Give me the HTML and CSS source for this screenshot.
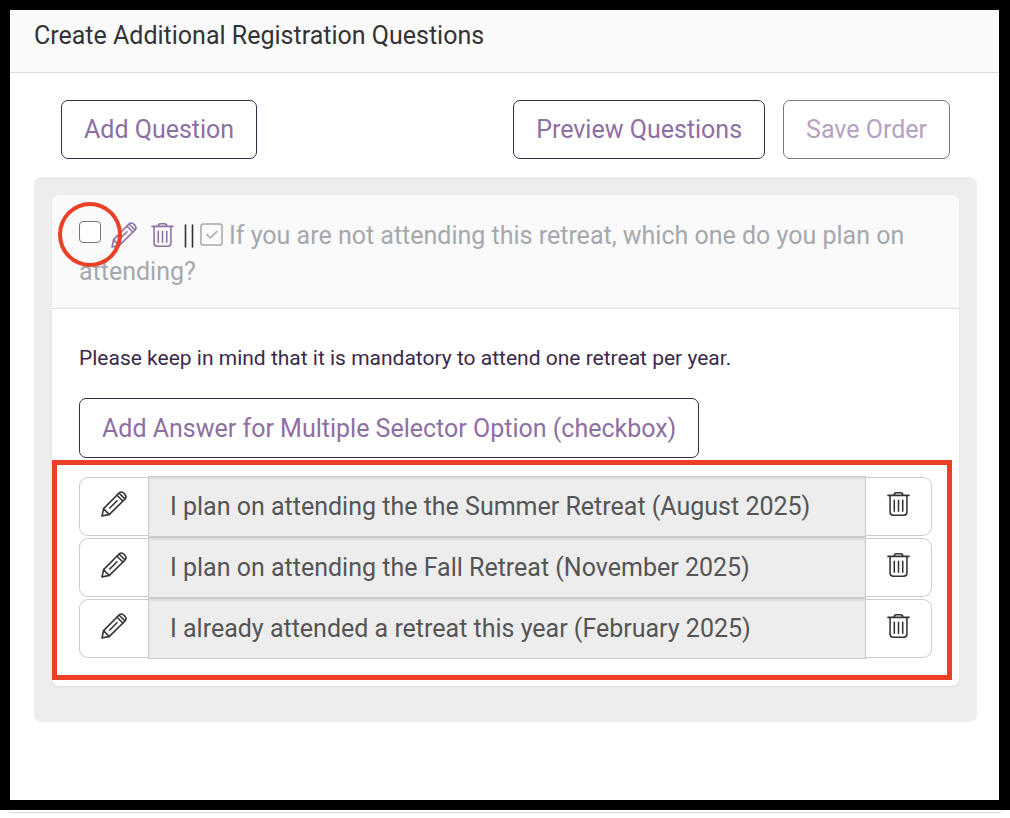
FILE: index.html
```html
<!DOCTYPE html>
<html lang="en">
<head>
    <meta charset="UTF-8">
    <title>Create Additional Registration Questions</title>
    <link rel="stylesheet" href="styles.css">
</head>
<body>
    <!-- icons used on this page -->
    <svg class="sprite" aria-hidden="true">
        <symbol id="pencil" viewBox="0 0 26 26">
            <path d="M1 25 L2.6 17.6 L17.8 2.2 C19.2 .8 21.2 .8 22.6 2 L24 3.4 C25.2 4.8 25.2 6.8 23.8 8.2 L8.4 23.4 Z"/>
            <path d="M2.6 17.6 C3.2 19.4 5 19.2 5.2 20.8 C7 21 6.6 22.8 8.4 23.4 M16 4.2 L21.8 10 M18.2 2.2 L23.8 7.8 M16 9.8 L8.8 17"/>
        </symbol>
        <symbol id="trash" viewBox="0 0 24 26">
            <path d="M1 4 H23 M3.2 4 V21.4 C3.2 23.6 4.4 24.8 6.6 24.8 H17.4 C19.6 24.8 20.8 23.6 20.8 21.4 V4 M7.4 4 C7.4 2 8.4 1.2 10 1.2 H14 C15.6 1.2 16.6 2 16.6 4 M7.6 9 V20.6 M12 9 V20.6 M16.4 9 V20.6"/>
        </symbol>
        <symbol id="handle" viewBox="0 0 10 24">
            <path d="M1.5 1 V23 M8.5 1 V23"/>
        </symbol>
        <symbol id="check" viewBox="0 0 24 24">
            <rect x="1" y="1" width="22" height="22" rx="2.5"/>
            <path d="M7 12.2 L10.8 15.6 L17.6 8.8"/>
        </symbol>
    </svg>

    <main class="page">
        <header class="page-header">
            <h1>Create Additional Registration Questions</h1>
        </header>

        <div class="content">
            <div class="toolbar">
                <button type="button" class="btn">Add Question</button>
                <div class="toolbar-right">
                    <button type="button" class="btn">Preview Questions</button>
                    <button type="button" class="btn" disabled>Save Order</button>
                </div>
            </div>

            <div class="panel">
                <section class="card">
                    <div class="card-header">
                        <span class="select-box">
                            <input type="checkbox" id="question1" aria-label="Select question">
                        </span>
                        <button type="button" class="icon-btn edit" aria-label="Edit question"><svg class="icon pencil"><use href="#pencil"/></svg></button>
                        <button type="button" class="icon-btn delete" aria-label="Delete question"><svg class="icon trash"><use href="#trash"/></svg></button>
                        <svg class="icon handle"><use href="#handle"/></svg>
                        <svg class="icon check"><use href="#check"/></svg>
                        <label for="question1">If you are not attending this retreat, which one do you plan on attending?</label>
                    </div>

                    <div class="card-body">
                        <p>Please keep in mind that it is mandatory to attend one retreat per year.</p>
                        <button type="button" class="btn">Add Answer for Multiple Selector Option (checkbox)</button>

                        <div class="answers">
                            <div class="answer">
                                <button type="button" class="edit" aria-label="Edit answer"><svg class="icon pencil"><use href="#pencil"/></svg></button>
                                <input type="text" aria-label="Answer 1" value="I plan on attending the the Summer Retreat (August 2025)" readonly>
                                <button type="button" class="delete" aria-label="Delete answer"><svg class="icon trash"><use href="#trash"/></svg></button>
                            </div>
                            <div class="answer">
                                <button type="button" class="edit" aria-label="Edit answer"><svg class="icon pencil"><use href="#pencil"/></svg></button>
                                <input type="text" aria-label="Answer 2" value="I plan on attending the Fall Retreat (November 2025)" readonly>
                                <button type="button" class="delete" aria-label="Delete answer"><svg class="icon trash"><use href="#trash"/></svg></button>
                            </div>
                            <div class="answer">
                                <button type="button" class="edit" aria-label="Edit answer"><svg class="icon pencil"><use href="#pencil"/></svg></button>
                                <input type="text" aria-label="Answer 3" value="I already attended a retreat this year (February 2025)" readonly>
                                <button type="button" class="delete" aria-label="Delete answer"><svg class="icon trash"><use href="#trash"/></svg></button>
                            </div>
                        </div>
                    </div>
                </section>
            </div>
        </div>
    </main>
    <div class="page-edge"></div>
</body>
</html>
```

FILE: styles.css
```css
* {
    box-sizing: border-box;
}

body {
    margin: 0;
    background-color: #ffffff;
    color: #333333;
    font-family: Roboto, "Liberation Sans", sans-serif;
    font-size: 25px;
}

button, input {
    font: inherit;
}

.sprite {
    position: absolute;
    width: 0;
    height: 0;
}

.page {
    border: 10px solid #000000;
    border-right-width: 11px;
}

.page-header {
    padding: 8px 24px 18px;
    background-color: #fafafa;
    border-bottom: 1px solid #dddddd;
}

.page-header h1 {
    margin: 0;
    font-size: 25px;
    font-weight: 400;
    line-height: 36px;
}

.content {
    padding: 27px 22px 78px 24px;
}

/* Buttons */
.btn {
    height: 59px;
    padding: 0 22px;
    border: 1px solid #3b2a4a;
    border-radius: 7px;
    background-color: #ffffff;
    color: #8e6fa3;
    cursor: pointer;
}

.btn:disabled {
    opacity: 0.65;
    cursor: default;
}

.toolbar {
    display: flex;
    justify-content: space-between;
    padding: 0 27px;
    margin-bottom: 18px;
}

.toolbar-right {
    display: flex;
    gap: 18px;
}

.panel {
    padding: 18px 18px 36px;
    border-radius: 7px;
    background-color: #ededed;
}

.card {
    border-radius: 7px;
    background-color: #ffffff;
    box-shadow: 0 1px 2px rgba(0, 0, 0, 0.08);
}

.card-header {
    padding: 23px 27px 18px;
    border-bottom: 1px solid #dddddd;
    border-radius: 7px 7px 0 0;
    background-color: #fafafa;
    color: #a5a8ad;
    line-height: 36px;
}

/* Icons */
.icon {
    fill: none;
    stroke: currentColor;
    stroke-width: 1.6;
    stroke-linecap: round;
    stroke-linejoin: round;
    vertical-align: -4px;
}

.pencil {
    width: 26px;
    height: 26px;
}

.trash {
    width: 23px;
    height: 26px;
}

.handle {
    width: 10px;
    height: 24px;
    color: #333333;
}

.check {
    width: 23px;
    height: 23px;
    vertical-align: -2px;
}

.icon-btn {
    padding: 0;
    border: 0;
    background: none;
    color: #8e6fa3;
    line-height: 26px;
}

.icon-btn.edit {
    margin-right: 8px;
}

.icon-btn.delete {
    margin-right: 3px;
}

/* Question selector with the red ring round it */
.select-box {
    display: inline-block;
    position: relative;
    width: 22px;
    height: 22px;
    margin-right: 4px;
    vertical-align: 1px;
}

.select-box input {
    display: block;
    appearance: none;
    width: 22px;
    height: 22px;
    margin: 0;
    border: 1px solid #767676;
    border-radius: 4px;
    background-color: #ffffff;
}

.select-box::after {
    content: "";
    position: absolute;
    inset: -19px -21px -24px;
    border: 4px solid #eb4026;
    border-radius: 50%;
    pointer-events: none;
}

.card-body {
    padding: 34px 27px 27px;
}

.card-body p {
    margin: 0 0 25px;
    color: #3b2a4a;
    font-size: 21px;
    line-height: 30px;
}

.card-body .btn {
    display: block;
    height: 60px;
}

/* Answer rows */
.answers {
    position: relative;
    margin-top: 18px;
}

.answers::after {
    content: "";
    position: absolute;
    inset: -16px -20px -21px -27px;
    border: 5px solid #eb4026;
    pointer-events: none;
}

.answer {
    display: flex;
}

.answer button {
    margin: 1px 0;
    padding: 0 0 5px;
    border: 1px solid #cccccc;
    background-color: #ffffff;
    color: #333333;
}

.answer .edit {
    width: 69px;
    border-right: 0;
    border-radius: 9px 0 0 9px;
}

.answer .delete {
    width: 66px;
    border-left: 0;
    border-radius: 0 9px 9px 0;
}

.answer input {
    flex: 1;
    min-width: 0;
    height: 61px;
    padding: 0 21px;
    border: 1px solid #cccccc;
    border-radius: 0;
    background-color: #ededed;
    box-shadow: inset 0 2px 2px rgba(0, 0, 0, 0.07);
    color: #555555;
}

/* Bottom edge of the window behind the page */
.page-edge {
    height: 3px;
    margin: 0 8px;
    border-bottom: 1px solid #dddddd;
    border-radius: 0 0 7px 7px;
    box-shadow: 0 1px 2px rgba(0, 0, 0, 0.08);
}
```
